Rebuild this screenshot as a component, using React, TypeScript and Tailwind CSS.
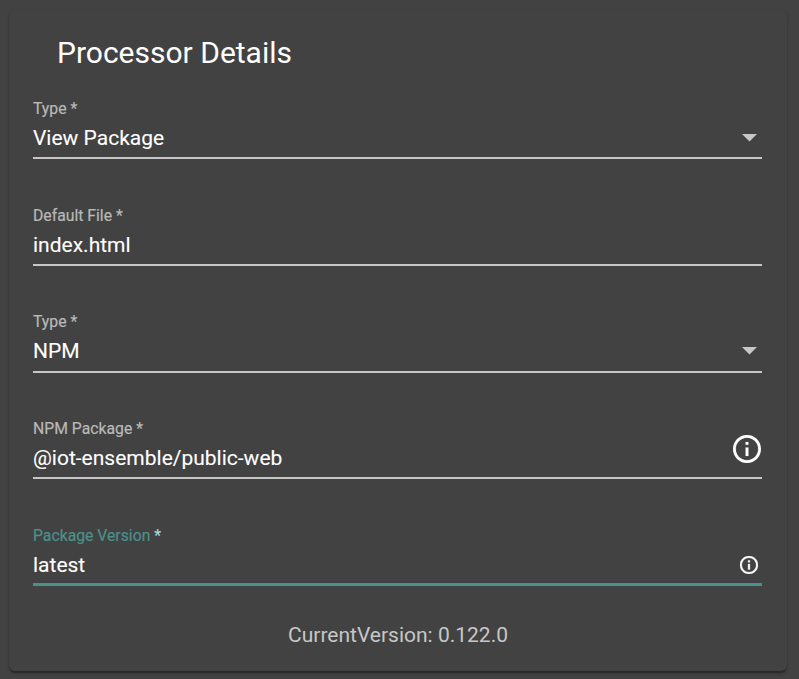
import type { ReactNode } from "react";

const CaretIcon = ({ className }: { className: string }) => (
  <svg className={`mr-[5px] h-[8px] w-[15px] ${className}`} viewBox="0 0 15 8" fill="#c7c7c7">
    <path d="M0 0h15L7.5 7.5z" />
  </svg>
);

const InfoIcon = ({ className }: { className: string }) => (
  <svg className={className} viewBox="2 2 20 20" fill="#fff" stroke="#fff">
    <path d="M11 7h2v2h-2zm0 4h2v6h-2zm1-9C6.48 2 2 6.48 2 12s4.480 10 10 10 10-4.480 10-10S17.520 2 12 2zm0 18c-4.410 0-8-3.590-8-8s3.590-8 8-8 8 3.590 8 8-3.590 8-8 8z" />
  </svg>
);

type FieldProps = {
  label: string;
  value: string;
  box: string;
  line?: string;
  labelColor?: string;
  starColor?: string;
  suffix?: ReactNode;
};

const Field = ({
  label,
  value,
  box,
  line = "h-[2px] bg-[#c7c7c7]",
  labelColor = "text-[#b9b9b9]",
  starColor = "",
  suffix,
}: FieldProps) => (
  <div className={`flex flex-col ${box}`}>
    <div className="flex grow items-end justify-between">
      <div className="flex h-full flex-col">
        <label
          className={`mt-px translate-y-[-0.4px] text-[15.75px] leading-[20px] [-webkit-text-stroke:0.2px_currentColor] ${labelColor}`}
        >
          {label} <span className={starColor}>*</span>
        </label>
        <span className="mt-[7px] text-[21px] leading-[24px] text-white [-webkit-text-stroke:0.1px_currentColor]">
          {value}
        </span>
      </div>
      {suffix}
    </div>
    <div className={`w-full ${line}`} />
  </div>
);

export default function App() {
  return (
    <main className="h-[679px] w-[799px] overflow-hidden bg-[#424242] pt-[10px] pl-[9px] font-['Roboto',sans-serif]">
      <section className="flex h-[661px] w-[778px] flex-col rounded-[6px] bg-[#424242] px-[24px] shadow-[0_3px_1.5px_-1.5px_rgba(0,0,0,0.2),0_1.5px_1.5px_0_rgba(0,0,0,0.14),0_1.5px_4.5px_0_rgba(0,0,0,0.12)]">
        <h1 className="mt-[25px] ml-[24px] text-[30px] leading-[36px] text-white">Processor Details</h1>
        <div className="mt-[27px] flex w-[729px] flex-col">
          <Field label="Type" value="View Package" box="h-[61px]" suffix={<CaretIcon className="mb-[15px]" />} />
          <Field label="Default File" value="index.html" box="mt-[46px] h-[61px]" />
          <Field label="Type" value="NPM" box="mt-[45px] h-[62px]" suffix={<CaretIcon className="mb-[16px]" />} />
          <Field
            label="NPM Package"
            value="@iot-ensemble/public-web"
            box="mt-[45px] h-[61px]"
            suffix={<InfoIcon className="mr-[1px] mb-[14px] h-[28px] w-[28px] stroke-[0.1px]" />}
          />
          <Field
            label="Package Version"
            value="latest"
            box="mt-[46px] h-[61px]"
            line="h-[3px] bg-[#4b918b]"
            labelColor="text-[#4b918b]"
            starColor="text-[#a5d6d0]"
            suffix={<InfoIcon className="mr-[4px] mb-[9px] h-[18px] w-[18px] stroke-[0.4px]" />}
          />
        </div>
        <p className="mt-[36px] text-center text-[21px] leading-[26px] text-[#c7c7c7]">CurrentVersion: 0.122.0</p>
      </section>
    </main>
  );
}
